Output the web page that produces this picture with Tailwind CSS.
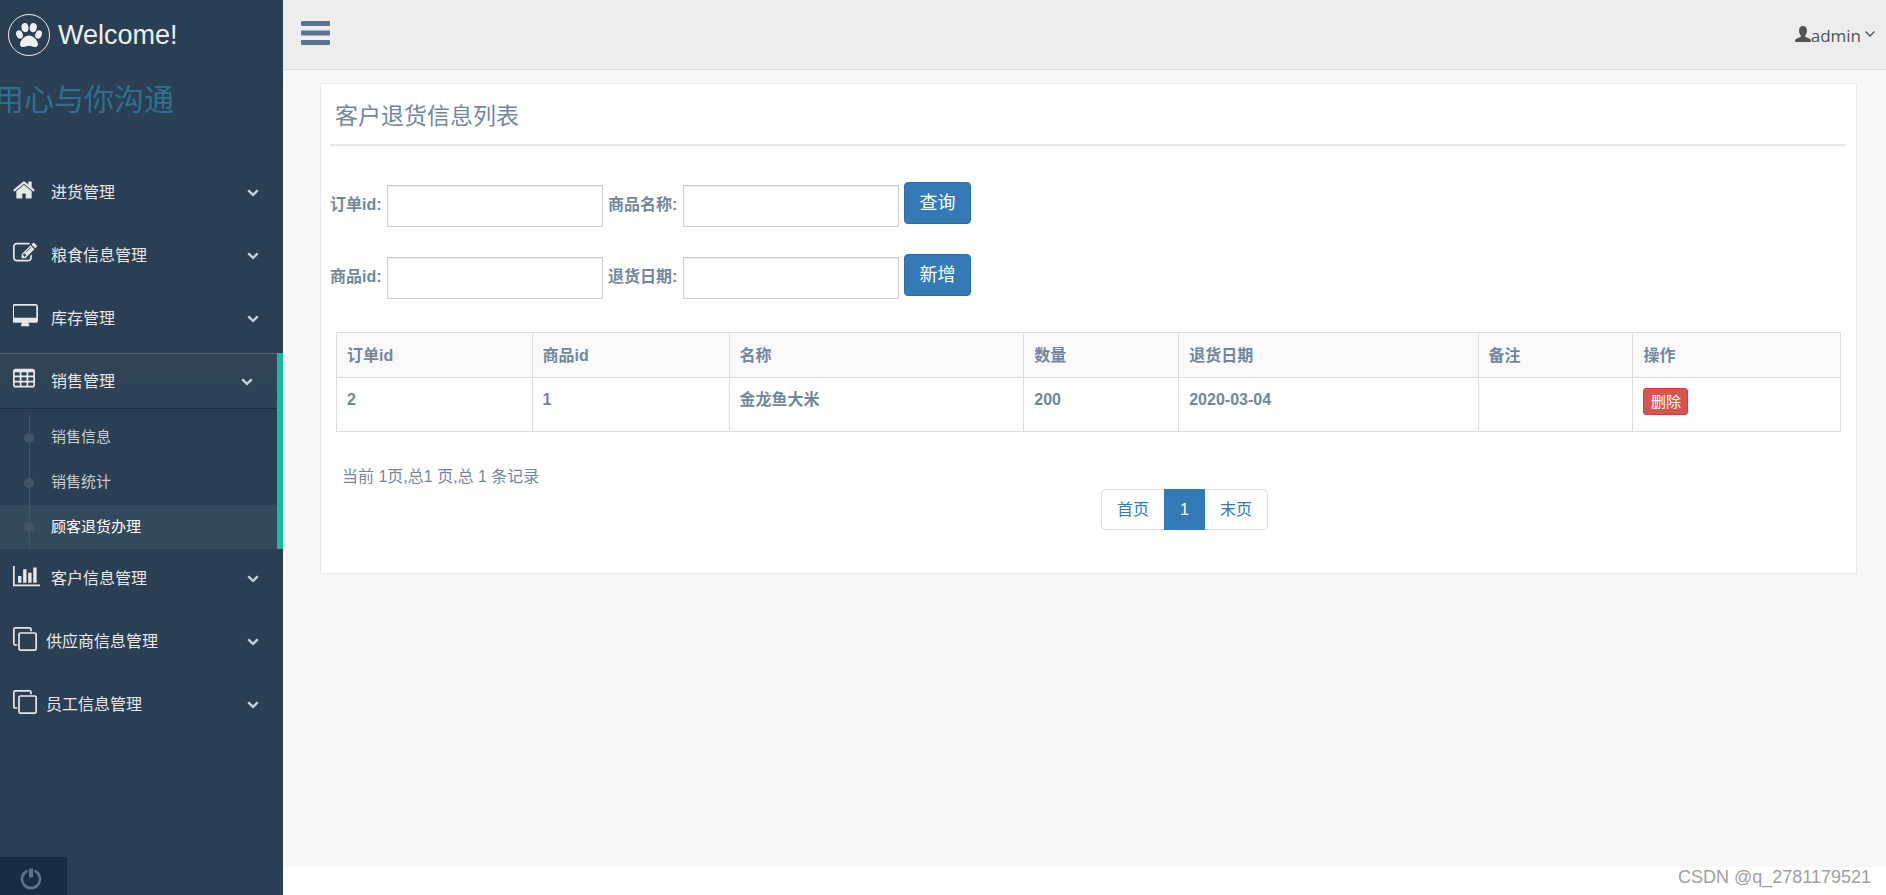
<!DOCTYPE html>
<html lang="zh-CN">
<head>
<meta charset="utf-8">
<meta name="viewport" content="width=device-width, initial-scale=1">
<title>客户退货信息列表</title>
<script src="https://cdn.jsdelivr.net/npm/@tailwindcss/browser@4"></script>
</head>
<body class="font-['Liberation_Sans','Noto_Sans_CJK_SC',sans-serif] text-base text-[#73879C] bg-white">
<svg class="hidden" aria-hidden="true">
  <symbol id="chevron" viewBox="0 0 1792 1792"><path d="M1683 808l-742 741q-19 19-45 19t-45-19l-742-741q-19-19-19-45.500t19-45.500l166-165q19-19 45-19t45 19l531 531 531-531q19-19 45-19t45 19l166 165q19 19 19 45.500t-19 45.500z"/></symbol>
  <symbol id="clone" viewBox="0 0 1792 1792"><path d="M1664 1632v-1088q0-13-9.500-22.500t-22.500-9.500h-1088q-13 0-22.500 9.500t-9.500 22.500v1088q0 13 9.500 22.500t22.500 9.500h1088q13 0 22.500-9.500t9.500-22.500zm128-1088v1088q0 66-47 113t-113 47h-1088q-66 0-113-47t-47-113v-1088q0-66 47-113t113-47h1088q66 0 113 47t47 113zm-384-384v160h-128v-160q0-13-9.500-22.500t-22.500-9.500h-1088q-13 0-22.500 9.500t-9.500 22.500v1088q0 13 9.500 22.500t22.500 9.500h160v128h-160q-66 0-113-47t-47-113v-1088q0-66 47-113t113-47h1088q66 0 113 47t47 113z"/></symbol>
</svg>
<div class="flex min-h-screen">
  <aside class="flex w-[283px] shrink-0 flex-col overflow-hidden bg-[#2A3F54]">
    <a href="#" class="flex h-[70px] items-center gap-2 pl-2 text-[27px] text-[#ECF0F1]">
      <span class="flex size-[42px] items-center justify-center rounded-full border border-[#EAEAEA]">
        <svg class="h-6 w-[26px]" viewBox="0 0 26 24" fill="currentColor" aria-hidden="true">
          <ellipse cx="9" cy="4.600" rx="3.500" ry="4.600" transform="rotate(-8 9 4.600)"/>
          <ellipse cx="17.300" cy="4.600" rx="3.500" ry="4.600" transform="rotate(8 17.300 4.600)"/>
          <ellipse cx="3.500" cy="11.500" rx="3.200" ry="4.300" transform="rotate(-22 3.500 11.500)"/>
          <ellipse cx="22.600" cy="11.500" rx="3.200" ry="4.300" transform="rotate(22 22.600 11.500)"/>
          <path d="M13 12.500c4 0 9 5 9 8.500 0 2.600-1.500 3-3.500 3s-4-1.200-5.500-1.200S9.500 24 7.500 24 4 23.600 4 21c0-3.500 5-8.500 9-8.500z"/>
        </svg>
      </span>
      <span>Welcome!</span>
    </a>
    <h2 class="-ml-1.5 pt-2 text-3xl leading-[44px] text-[#2F7090]">用心与你沟通</h2>
    <nav class="mt-[42px] text-[#E7E7E7]">
      <ul>
        <li class="mb-[7px]">
          <a href="#" class="flex h-14 items-center pr-6 pl-[13px]">
            <span class="mb-1 w-[38px]"><svg class="size-6 -ml-px" viewBox="0 0 1792 1792" fill="currentColor" aria-hidden="true"><path d="M1472 992v480q0 26-19 45t-45 19h-384v-384h-256v384h-384q-26 0-45-19t-19-45v-480q0-1 .500-3t.500-3l575-474 575 474q1 2 1 6zm223-69l-62 74q-8 9-21 11h-3q-13 0-21-7l-692-577-692 577q-12 8-24 7-13-2-21-11l-62-74q-8-10-7-23.500t11-21.500l719-599q32-26 76-26t76 26l244 204v-195q0-14 9-23t23-9h192q14 0 23 9t9 23v408l219 182q10 8 11 21.500t-7 23.500z"/></svg></span>
            <span class="grow pt-0.5">进货管理</span>
            <svg class="size-3 text-[#C4CFDA]" fill="currentColor" aria-hidden="true"><use href="#chevron"/></svg>
          </a>
        </li>
        <li class="mb-[7px]">
          <a href="#" class="flex h-14 items-center pr-6 pl-[13px]">
            <span class="mb-1 w-[38px]"><svg class="size-6" viewBox="0 0 1792 1792" fill="currentColor" aria-hidden="true"><path d="M888 1184l116-116-152-152-116 116v56h96v96h56zm440-720q-16-16-33 1l-350 350q-17 17-1 33t33-1l350-350q17-17 1-33zm80 594v190q0 119-84.500 203.500t-203.500 84.500h-832q-119 0-203.500-84.500t-84.500-203.500v-832q0-119 84.500-203.500t203.500-84.500h832q63 0 117 25 15 7 18 23 3 17-9 29l-49 49q-14 14-32 8-23-6-45-6h-832q-66 0-113 47t-47 113v832q0 66 47 113t113 47h832q66 0 113-47t47-113v-126q0-13 9-22l64-64q15-15 35-7t20 29zm-96-738l288 288-672 672h-288v-288zm444 132l-92 92-288-288 92-92q28-28 68-28t68 28l152 152q28 28 28 68t-28 68z"/></svg></span>
            <span class="grow pt-0.5">粮食信息管理</span>
            <svg class="size-3 text-[#C4CFDA]" fill="currentColor" aria-hidden="true"><use href="#chevron"/></svg>
          </a>
        </li>
        <li class="mb-[7px]">
          <a href="#" class="flex h-14 items-center pr-6 pl-[13px]">
            <span class="mb-1 w-[38px]"><svg class="h-6 w-[26px]" viewBox="0 0 1920 1792" fill="currentColor" aria-hidden="true"><path d="M1728 992v-832q0-13-9.500-22.500t-22.500-9.500h-1600q-13 0-22.500 9.500t-9.500 22.500v832q0 13 9.500 22.500t22.500 9.500h1600q13 0 22.500-9.500t9.500-22.500zm128-832v1088q0 66-47 113t-113 47h-544q0 37 16 77.500t32 71 16 43.500q0 26-19 45t-45 19h-512q-26 0-45-19t-19-45q0-14 16-44t32-70 16-78h-544q-66 0-113-47t-47-113v-1088q0-66 47-113t113-47h1600q66 0 113 47t47 113z"/></svg></span>
            <span class="grow pt-0.5">库存管理</span>
            <svg class="size-3 text-[#C4CFDA]" fill="currentColor" aria-hidden="true"><use href="#chevron"/></svg>
          </a>
        </li>
        <li class="mb-px border-r-6 border-[#1ABB9C]">
          <a href="#" class="flex h-14 items-center border-t border-b border-t-[#566676] border-b-[#1E2E40] bg-linear-to-b from-[#334556] to-[#2C4257] pr-6 pl-[13px]">
            <span class="mb-1 w-[38px]"><svg class="h-6 w-[22px]" viewBox="0 0 1664 1792" fill="currentColor" fill-rule="evenodd" aria-hidden="true"><path d="M160 128h1344q66 0 113 47t47 113v1088q0 66-47 113t-113 47h-1344q-66 0-113-47t-47-113v-1088q0-66 47-113t113-47zM160 384h320q32 0 32 32v192q0 32-32 32h-320q-32 0-32-32v-192q0-32 32-32zM672 384h320q32 0 32 32v192q0 32-32 32h-320q-32 0-32-32v-192q0-32 32-32zM1184 384h320q32 0 32 32v192q0 32-32 32h-320q-32 0-32-32v-192q0-32 32-32zM160 768h320q32 0 32 32v192q0 32-32 32h-320q-32 0-32-32v-192q0-32 32-32zM672 768h320q32 0 32 32v192q0 32-32 32h-320q-32 0-32-32v-192q0-32 32-32zM1184 768h320q32 0 32 32v192q0 32-32 32h-320q-32 0-32-32v-192q0-32 32-32zM160 1152h320q32 0 32 32v192q0 32-32 32h-320q-32 0-32-32v-192q0-32 32-32zM672 1152h320q32 0 32 32v192q0 32-32 32h-320q-32 0-32-32v-192q0-32 32-32zM1184 1152h320q32 0 32 32v192q0 32-32 32h-320q-32 0-32-32v-192q0-32 32-32z"/></svg></span>
            <span class="grow pt-0.5">销售管理</span>
            <svg class="size-3 text-[#C4CFDA]" fill="currentColor" aria-hidden="true"><use href="#chevron"/></svg>
          </a>
          <ul class="relative pt-1.5 text-[15px] text-[#C8CDD2]">
            <li><a href="#" class="flex h-[45px] items-center pl-6"><span class="mr-[17px] size-2.5 rounded-full bg-[#425668]"></span>销售信息</a></li>
            <li><a href="#" class="flex h-[45px] items-center pl-6"><span class="mr-[17px] size-2.5 rounded-full bg-[#425668]"></span>销售统计</a></li>
            <li><a href="#" class="flex h-11 items-center bg-[#34495C] pl-6 text-white"><span class="mr-[17px] size-2.5 rounded-full bg-[#425668]"></span>顾客退货办理</a></li>
            <li class="absolute top-1.5 bottom-0 left-[29px] w-px bg-[#425668]" role="presentation"></li>
          </ul>
        </li>
        <li class="mb-[7px]">
          <a href="#" class="flex h-14 items-center pr-6 pl-[13px]">
            <span class="mb-1 w-[38px]"><svg class="h-6 w-[27px]" viewBox="0 0 2048 1792" fill="currentColor" aria-hidden="true"><path d="M640 896v512h-256v-512h256zm384-512v1024h-256v-1024h256zm1024 1152v128h-2048v-1536h128v1408h1920zm-640-896v768h-256v-768h256zm384-384v1152h-256v-1152h256z"/></svg></span>
            <span class="grow pt-0.5">客户信息管理</span>
            <svg class="size-3 text-[#C4CFDA]" fill="currentColor" aria-hidden="true"><use href="#chevron"/></svg>
          </a>
        </li>
        <li class="mb-[7px]">
          <a href="#" class="flex h-14 items-center pr-6 pl-[13px]">
            <span class="mb-1 w-[33px]"><svg class="size-6" fill="currentColor" aria-hidden="true"><use href="#clone"/></svg></span>
            <span class="grow pt-0.5">供应商信息管理</span>
            <svg class="size-3 text-[#C4CFDA]" fill="currentColor" aria-hidden="true"><use href="#chevron"/></svg>
          </a>
        </li>
        <li>
          <a href="#" class="flex h-14 items-center pr-6 pl-[13px]">
            <span class="mb-1 w-[33px]"><svg class="size-6" fill="currentColor" aria-hidden="true"><use href="#clone"/></svg></span>
            <span class="grow pt-0.5">员工信息管理</span>
            <svg class="size-3 text-[#C4CFDA]" fill="currentColor" aria-hidden="true"><use href="#chevron"/></svg>
          </a>
        </li>
      </ul>
    </nav>
    <button type="button" aria-label="退出" class="mt-auto flex h-[38px] w-[67px] items-center bg-[#172D44] pt-1.5 pl-5 text-[#5A738E]">
      <svg class="size-[22px]" viewBox="0 0 22 22" fill="none" stroke="currentColor" aria-hidden="true"><path stroke-width="2.600" d="M7.500 2.800a9 9 0 1 0 7 0"/><path stroke-width="4" d="M11 .5v9"/></svg>
    </button>
  </aside>

  <div class="flex min-w-0 grow flex-col">
    <header class="flex h-[70px] items-center justify-between border-b border-[#D9DEE4] bg-[#EDEDED] pr-[11px] pl-[18px]">
      <button type="button" aria-label="菜单" class="mb-1 text-[#5A738E]">
        <svg class="h-6 w-[29px]" viewBox="0 0 29 24" fill="currentColor" aria-hidden="true"><rect width="29" height="5" rx="1"/><rect y="9.500" width="29" height="5" rx="1"/><rect y="19" width="29" height="5" rx="1"/></svg>
      </button>
      <a href="#" class="flex items-center pt-0.5 font-['Open_Sans','Noto_Sans',sans-serif] text-[17px] leading-6 text-[#515356]">
        <svg class="mb-1 h-4 w-4" viewBox="0 0 17 16" preserveAspectRatio="none" fill="currentColor" aria-hidden="true"><path d="M8.500 0c2.600 0 4.200 1.700 4.200 4.400 0 2-.8 4-1.900 5 0 1 .3 1.500 1.200 1.900l3.500 1.500c1 .5 1.500 1.400 1.500 3.200H0c0-1.800.5-2.700 1.500-3.200L5 11.300c.9-.4 1.200-.9 1.200-1.900-1.100-1-1.900-3-1.900-5C4.300 1.700 5.900 0 8.500 0z"/></svg>
        <span>admin</span>
        <svg class="ml-1 mb-1 h-1.5 w-2.5" viewBox="0 0 10 6" fill="none" stroke="currentColor" stroke-width="1.400" aria-hidden="true"><path d="M.6.6 5 5 9.400.6"/></svg>
      </a>
    </header>

    <main class="grow bg-[#F7F7F7] pt-[13px] pr-[29px] pl-[37px]">
      <section class="border border-[#E6E9ED] bg-white px-[9px] pb-[43px]">
        <h1 class="border-b-2 border-[#E6E9ED] pt-4 pb-3 pl-[5px] text-[23px] leading-[32px]">客户退货信息列表</h1>
        <form class="flex flex-col gap-[30px] pt-[39px] font-bold">
          <div class="flex h-[42px] items-center gap-[5px]">
            <label for="order" class="w-[52px] pb-0.5 whitespace-nowrap">订单id:</label>
            <input id="order" type="text" class="h-[42px] w-[216px] border border-[#CCC] px-3 font-normal shadow-[inset_0_1px_1px_rgba(0,0,0,0.075)]">
            <label for="name" class="w-[70px] pb-0.5 whitespace-nowrap">商品名称:</label>
            <input id="name" type="text" class="h-[42px] w-[216px] border border-[#CCC] px-3 font-normal shadow-[inset_0_1px_1px_rgba(0,0,0,0.075)]">
            <button type="submit" class="mb-1.5 h-[42px] w-[67px] rounded border border-[#2E6DA4] bg-[#337AB7] text-lg font-normal text-white">查询</button>
          </div>
          <div class="flex h-[42px] items-center gap-[5px]">
            <label for="goods" class="w-[52px] pb-0.5 whitespace-nowrap">商品id:</label>
            <input id="goods" type="text" class="h-[42px] w-[216px] border border-[#CCC] px-3 font-normal shadow-[inset_0_1px_1px_rgba(0,0,0,0.075)]">
            <label for="date" class="w-[70px] pb-0.5 whitespace-nowrap">退货日期:</label>
            <input id="date" type="text" class="h-[42px] w-[216px] border border-[#CCC] px-3 font-normal shadow-[inset_0_1px_1px_rgba(0,0,0,0.075)]">
            <button type="button" class="mb-1.5 h-[42px] w-[67px] rounded border border-[#2E6DA4] bg-[#337AB7] text-lg font-normal text-white">新增</button>
          </div>
        </form>
        <div class="px-1.5 pt-[33px]">
          <table class="w-full table-fixed border-collapse text-left font-bold [&_td]:border [&_td]:border-[#DDD] [&_td]:px-2.5 [&_th]:border [&_th]:border-[#DDD] [&_th]:px-2.5 [&_th]:pt-0.5">
            <colgroup><col class="w-[13%]"><col class="w-[13.1%]"><col class="w-[19.6%]"><col class="w-[10.3%]"><col class="w-[19.9%]"><col class="w-[10.3%]"><col></colgroup>
            <thead><tr class="h-[45px] bg-[#F9F9F9]"><th>订单id</th><th>商品id</th><th>名称</th><th>数量</th><th>退货日期</th><th>备注</th><th>操作</th></tr></thead>
            <tbody><tr class="h-[54px] align-top leading-6 [&_td]:pt-2.5"><td>2</td><td>1</td><td>金龙鱼大米</td><td>200</td><td>2020-03-04</td><td></td><td><button type="button" class="block h-[27px] w-[45px] rounded-[3px] border border-[#D43F3A] bg-[#D9534F] text-[15px] leading-5 font-normal text-white">删除</button></td></tr></tbody>
          </table>
        </div>
        <p class="pt-[33px] pl-3 leading-6">当前 1页,总1 页,总 1 条记录</p>
        <nav aria-label="分页" class="flex justify-center pl-[192px] text-[#337AB7]">
          <a href="#" class="flex h-[41px] w-[63px] items-center justify-center rounded-l-[5px] border border-r-0 border-[#DDD]">首页</a>
          <a href="#" aria-current="page" class="flex h-[41px] w-[41px] items-center justify-center bg-[#337AB7] text-white">1</a>
          <a href="#" class="flex h-[41px] w-[63px] items-center justify-center rounded-r-[5px] border border-l-0 border-[#DDD]">末页</a>
        </nav>
      </section>
    </main>
    <footer class="flex h-7 items-start justify-end bg-white pr-[15px] text-lg leading-5 text-[#A0A0A0]">CSDN @q_2781179521</footer>
  </div>
</div>
</body>
</html>
